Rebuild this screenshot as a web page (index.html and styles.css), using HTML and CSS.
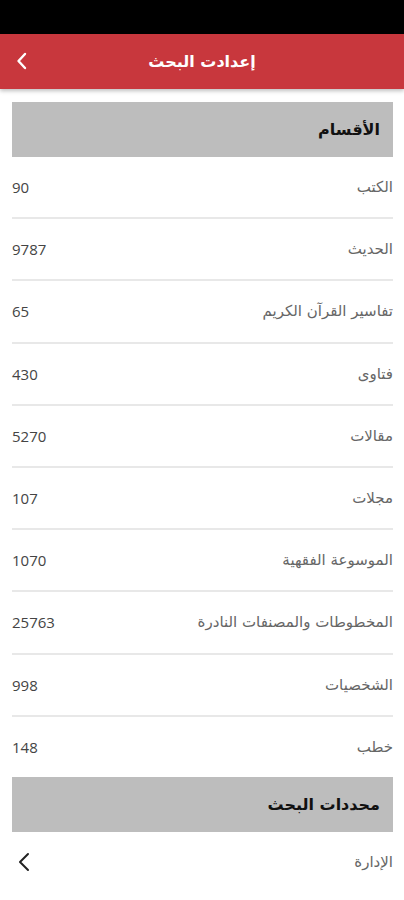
FILE: index.html
```html
<!DOCTYPE html>
<html lang="ar" dir="rtl">
<head>
    <meta charset="UTF-8">
    <meta name="viewport" content="width=device-width, initial-scale=1.0">
    <title>إعدادت البحث</title>
    <link rel="stylesheet" href="styles.css">
</head>
<body>
    <div class="status-bar"></div>

    <header class="app-bar">
        <h1 class="app-title">إعدادت البحث</h1>
        <button class="back-btn" aria-label="رجوع">
            <svg width="14" height="20" viewBox="0 0 14 20"><path d="M10 3 L3.5 10 L10 17" fill="none" stroke="#fff" stroke-width="2.4" stroke-linecap="round" stroke-linejoin="round"/></svg>
        </button>
    </header>

    <main class="content">
        <div class="section-head">الأقسام</div>
        <ul class="list">
            <li class="row"><span class="label">الكتب</span><span class="count">90</span></li>
            <li class="row"><span class="label">الحديث</span><span class="count">9787</span></li>
            <li class="row"><span class="label">تفاسير القرآن الكريم</span><span class="count">65</span></li>
            <li class="row"><span class="label">فتاوى</span><span class="count">430</span></li>
            <li class="row"><span class="label">مقالات</span><span class="count">5270</span></li>
            <li class="row"><span class="label">مجلات</span><span class="count">107</span></li>
            <li class="row"><span class="label">الموسوعة الفقهية</span><span class="count">1070</span></li>
            <li class="row"><span class="label">المخطوطات والمصنفات النادرة</span><span class="count">25763</span></li>
            <li class="row"><span class="label">الشخصيات</span><span class="count">998</span></li>
            <li class="row last"><span class="label">خطب</span><span class="count">148</span></li>
        </ul>

        <div class="section-head">محددات البحث</div>
        <ul class="list">
            <li class="row last">
                <span class="label">الإدارة</span>
                <svg class="chevron" width="14" height="22" viewBox="0 0 14 22"><path d="M11 3 L3 11 L11 19" fill="none" stroke="#222" stroke-width="2" stroke-linecap="round" stroke-linejoin="round"/></svg>
            </li>
        </ul>
    </main>
</body>
</html>
```

FILE: styles.css
```css
body {
    margin: 0;
    background-color: #ffffff;
    font-family: "DejaVu Sans", "Noto Sans", sans-serif;
    color: #555555;
}
.status-bar {
    height: 34px;
    background-color: #000000;
}
.app-bar {
    position: relative;
    height: 55px;
    background-color: #c8373d;
    display: flex;
    align-items: center;
    justify-content: center;
    box-shadow: 0 2px 4px rgba(0, 0, 0, 0.25);
}
.app-title {
    margin: 0;
    color: #ffffff;
    font-size: 16px;
    font-weight: bold;
}
.back-btn {
    position: absolute;
    left: 15px;
    top: 17px;
    padding: 0;
    border: none;
    background: none;
    line-height: 0;
}
.content {
    padding: 13px 11px 0 12px;
}
.section-head {
    height: 55px;
    background-color: #bdbdbd;
    display: flex;
    align-items: center;
    padding: 0 13px;
    font-size: 16px;
    font-weight: bold;
    color: #111111;
}
.list {
    list-style: none;
    margin: 0;
    padding: 0;
}
.row {
    height: 60.2px;
    display: flex;
    align-items: center;
    justify-content: space-between;
    border-bottom: 2px solid #e8e8e8;
}
.row.last {
    border-bottom: none;
}
.label {
    font-size: 15px;
    color: #666666;
}
.count {
    font-family: "Open Sans", "Liberation Sans", sans-serif;
    font-size: 15px;
    color: #444444;
}
.chevron {
    margin-left: 5px;
}
```
